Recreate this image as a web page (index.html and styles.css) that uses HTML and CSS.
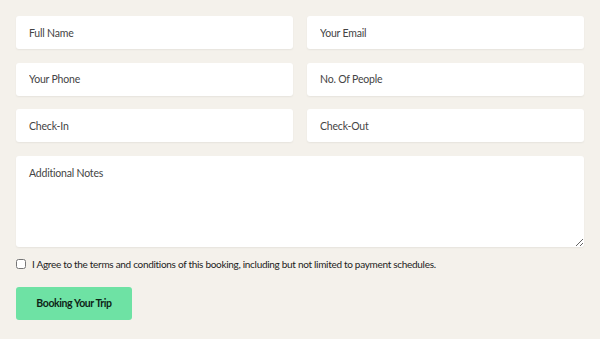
FILE: index.html
```html
<!doctype html>
<html lang="en">

<head>
    <meta charset="UTF-8" />
    <meta name="viewport" content="width=device-width, initial-scale=1.0" />
    <title>Booking</title>
    <link rel="stylesheet" href="styles.css">
</head>

<body>
    <form class="booking-form">
        <div class="form-grid">
            <input type="text" placeholder="Full Name" class="field">
            <input type="email" placeholder="Your Email" class="field">
            <input type="text" placeholder="Your Phone" class="field">
            <input type="text" placeholder="No. Of People" class="field">
            <input type="text" placeholder="Check-In" class="field">
            <input type="text" placeholder="Check-Out" class="field">
            <textarea placeholder="Additional Notes" class="field notes"></textarea>
        </div>
        <label class="agree">
            <input type="checkbox">
            <span>I Agree to the terms and conditions of this booking, including but not limited to payment schedules.</span>
        </label>
        <button type="submit" class="book-btn">Booking Your Trip</button>
    </form>
</body>

</html>
```

FILE: styles.css
```css
body {
    margin: 0;
    background: #f4f1eb;
    font-family: Lato, "Open Sans", sans-serif;
}

.booking-form {
    padding: 16px 16px 0 16px;
}

.form-grid {
    display: grid;
    grid-template-columns: 1fr 1fr;
    column-gap: 14px;
    row-gap: 13.5px;
}

.field {
    box-sizing: border-box;
    height: 33px;
    border: none;
    border-radius: 3px;
    background: #fff;
    padding: 0 13px;
    font-family: Lato, "Open Sans", sans-serif;
    font-size: 10.5px;
    letter-spacing: -0.2px;
    color: #333;
    box-shadow: 0 1px 2px rgba(0, 0, 0, 0.06);
    outline: none;
}

.field::placeholder {
    color: #444;
}

.notes {
    grid-column: 1 / 3;
    height: 91px;
    padding: 11px 13px;
    resize: vertical;
}

.agree {
    display: flex;
    align-items: center;
    margin-top: 11px;
    font-size: 10px;
    letter-spacing: -0.3px;
    color: #222;
}

.agree input {
    width: 10px;
    height: 10px;
    margin: 0 6px 0 0;
}

.book-btn {
    display: block;
    margin-top: 17px;
    width: 116px;
    height: 33px;
    border: none;
    border-radius: 3px;
    background: #6ee2a4;
    color: #0d2416;
    font-family: Lato, "Open Sans", sans-serif;
    font-weight: 700;
    font-size: 10.5px;
    letter-spacing: -0.4px;
    cursor: pointer;
}
```
